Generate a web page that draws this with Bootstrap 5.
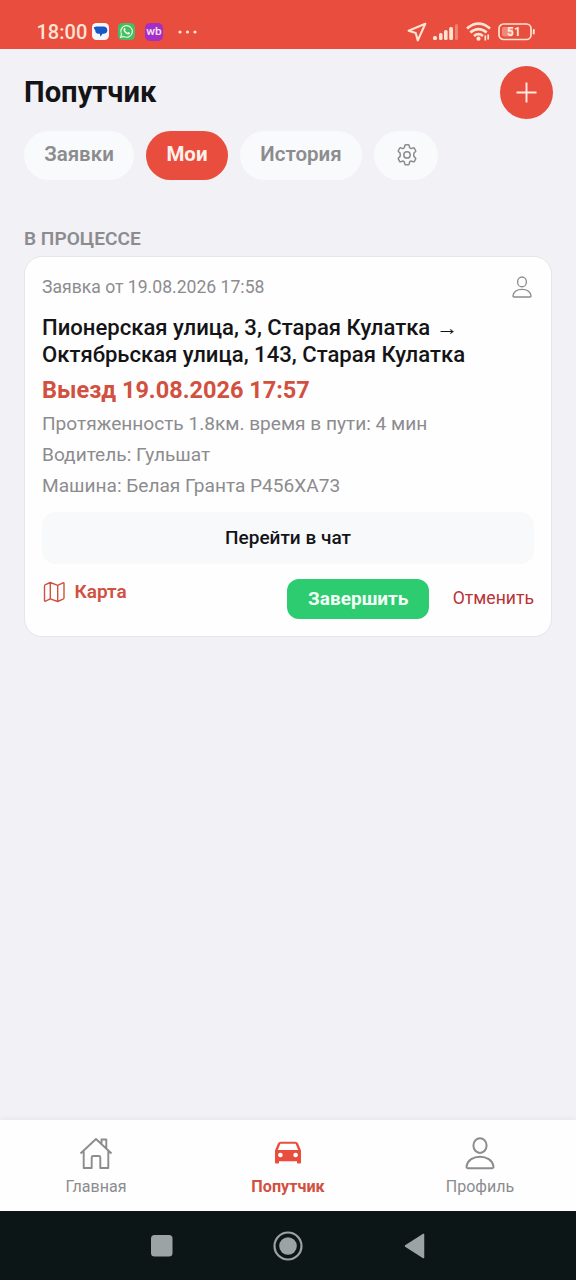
<!DOCTYPE html>
<html lang="ru">
<head>
<meta charset="utf-8">
<meta name="viewport" content="width=device-width, initial-scale=1">
<title>Попутчик</title>
<link href="https://cdn.jsdelivr.net/npm/bootstrap@5.3.0/dist/css/bootstrap.min.css" rel="stylesheet">
<style>
:root{--brand:#e84d3d;--muted:#8c8c8f}
body{font-family:Roboto,"Noto Sans",sans-serif;background:#f2f1f6;color:#141417;height:1280px;overflow:hidden}
svg{display:block;flex:none}
.statusbar{height:48.5px;background:var(--brand);color:#ffe3d3;padding:15px 40px 0 37px}
.clock{font-size:20px;font-weight:500;line-height:34px;width:63px;margin-left:-.5px}
.page-head{height:87.5px;padding:0 23.5px 0 24px}
.page-title{font-size:29.2px;line-height:36px;font-weight:700}
.add-btn{width:53px;height:53px;background:var(--brand)}
.tabs{height:50px;margin:-5.5px 24px 0;gap:12px}
.tab-pill{height:49px;border-radius:25px;background:#f9fafc;color:var(--muted);font-size:20.5px;font-weight:600;line-height:47px;text-align:center}
.tab-pill.active{background:var(--brand);color:#fff0ea;font-weight:700;height:49.5px}
.section-label{color:var(--muted);font-size:19.1px;font-weight:600;line-height:22px;margin:47px 24px 6px}
.ride{margin:0 24px;height:381px;border:1px solid #e6e5ea;border-radius:18px;padding:17px 17px 0;background:#fefefe}
.ride p{margin:0}
.meta{color:var(--muted);font-size:19.1px;line-height:31px}
.meta-date{height:40px;font-size:17.6px;line-height:26px}
.route{font-size:22.1px;font-weight:500;line-height:27px;white-space:nowrap}
.depart{color:#d2503f;font-size:23.5px;font-weight:700;line-height:32px}
.chat-btn{height:52px;border-radius:14px;background:#f8f9fb;font-size:19px;font-weight:500}
.map-link{color:#d2503f;font-size:19px;font-weight:600;line-height:26px;gap:8.5px;padding-left:1px}
.done-btn{width:142px;height:40px;border-radius:12px;background:#2ecc71;color:#f3fff7;font-size:19px;font-weight:700;line-height:40px;text-align:center}
.cancel{color:#b93236;font-size:17.6px;line-height:39px;margin-left:23.5px}
.tabbar{height:91px;background:#fefefe;box-shadow:0 -1px 6px rgba(0,0,0,.05);font-size:16px;color:var(--muted);padding-top:17px}
.tabbar .on{color:#d2503f;font-weight:700;font-size:16.2px}
.tabbar span{line-height:20px;margin-top:6px}
.sysnav{height:69px;background:#0c1617}
</style>
</head>
<body class="d-flex flex-column">
<svg width="0" height="0" class="position-absolute" aria-hidden="true">
  <symbol id="person" viewBox="0 0 30 34"><g fill="none" stroke="currentColor" stroke-width="2"><ellipse cx="15" cy="8.6" rx="6.6" ry="7.3"/><path d="M2.800 31.200C1.700 31.200 1.400 30.400 1.600 29.200 2.600 23 8.400 19.700 15 19.700S27.400 23 28.400 29.200C28.600 30.400 28.300 31.200 27.200 31.200Z" stroke-linejoin="round"/></g></symbol>
</svg>

<header class="statusbar d-flex align-items-start">
  <div class="clock">18:00</div>
  <div class="d-flex align-items-center" style="height:33px">
    <svg class="me-2" width="17" height="17" viewBox="0 0 17 17" style="margin-left:-8px"><rect width="17" height="17" rx="4.500" fill="#f7f7fb"/><path d="M5.500 3.500h6a3.700 3.700 0 0 1 3.900 3.700c0 2.300-1.900 3.600-3.900 3.600h-1L8.500 13.800 7.800 10.800H6.500C4.300 10.800 3.300 9.300 3.300 7.500L1.800 5C1.700 4 3.500 3.500 5.500 3.500z" fill="#1759c4"/></svg>
    <svg width="17" height="17" viewBox="0 0 17 17" style="margin:0 9.500px 0 1.500px"><rect width="17" height="17" rx="4.500" fill="#45bd64"/><path d="M2.600 14.400l.9-3.200a5.800 5.800 0 1 1 2.300 2.300z" fill="none" stroke="#e6f7dc" stroke-width="1.200"/><path d="M6 5.200c.4-.4 1-.3 1.200.2l.4 1c.1.400-.4.800-.5 1 .5 1 1.300 1.800 2.400 2.300.3-.2.700-.8 1.100-.6l1.200.6c.4.200.2 1-.2 1.400-1 .9-2.700.3-4-.8C6.200 9.300 4.700 6.800 6 5.200z" fill="#e6f7dc"/></svg>
    <svg width="18" height="18" viewBox="0 0 18 18"><rect width="18" height="18" rx="5" fill="#a42fc6"/><text x="9" y="12.300" font-family="Roboto, sans-serif" font-size="11.800" font-weight="500" fill="#f8e6f6" text-anchor="middle">wb</text></svg>
    <svg width="22" height="6" viewBox="0 0 22 6" fill="#ffe3d3" style="margin-left:14.500px"><circle cx="3" cy="3" r="1.600"/><circle cx="10.500" cy="3" r="1.600"/><circle cx="18" cy="3" r="1.600"/></svg>
  </div>
  <div class="d-flex align-items-center ms-auto" style="height:34px">
    <svg width="20" height="20" viewBox="0 0 20 20"><path d="M18.300 1.700L1.600 8.800l7.100 2.200 2.100 7.400z" fill="none" stroke="#ffe3d3" stroke-width="2.100" stroke-linejoin="round"/></svg>
    <svg width="26" height="18" viewBox="0 0 26 18" fill="#ffe3d3" style="margin-left:6px"><rect x="0" y="13" width="4" height="4" rx="1.500"/><rect x="6" y="10" width="3.500" height="7" rx="1.500"/><rect x="11" y="7" width="3.600" height="10" rx="1.500"/><rect x="16.200" y="4" width="3.800" height="13" rx="1.500"/><rect x="22" y="1" width="3" height="16" rx="1.500" opacity=".35"/></svg>
    <svg width="26" height="20" viewBox="0 0 26 20" style="margin-left:7px"><g fill="none" stroke="#ffe3d3" stroke-width="2.700"><path d="M1 6.500q11.500-9.600 23 0"/><path d="M4.300 10.500q8.200-6.800 16.400 0"/><path d="M8 14q4.500-3.600 9 0"/></g><circle cx="12.500" cy="16.700" r="2.100" fill="#ffe3d3"/><path d="M19.300 13.500v5M22.200 12.500v5" stroke="#ffe3d3" stroke-width="1.700"/></svg>
    <svg width="38" height="18" viewBox="0 0 38 18" style="margin-left:6px"><rect x="1" y="1" width="32" height="15.500" rx="4.500" fill="none" stroke="#ffe3d3" stroke-width="1.700"/><rect x="4" y="4" width="11" height="9.500" rx="2" fill="#ffe3d3" opacity=".4"/><rect x="34.800" y="6" width="2" height="5.500" rx="1" fill="#ffe3d3"/><text x="16" y="13" font-family="Roboto, sans-serif" font-size="12" font-weight="700" fill="#ffe9dc" text-anchor="middle">51</text></svg>
  </div>
</header>

<main class="flex-grow-1">
  <div class="page-head d-flex align-items-center justify-content-between">
    <h1 class="page-title m-0">Попутчик</h1>
    <div class="add-btn rounded-circle d-flex align-items-center justify-content-center"><svg width="21" height="21" viewBox="0 0 21 21"><path d="M10.500.5v20M.5 10.500h20" stroke="#ffeae2" stroke-width="1.900"/></svg></div>
  </div>
  <nav class="tabs d-flex">
    <div class="tab-pill" style="width:110px">Заявки</div>
    <div class="tab-pill active" style="width:82px">Мои</div>
    <div class="tab-pill" style="width:122px">История</div>
    <div class="tab-pill d-flex align-items-center justify-content-center" style="width:64px"><svg width="22" height="22" viewBox="0 0 22 22" fill="none" stroke="currentColor" stroke-width="1.500" stroke-linejoin="round" style="margin-left:1px"><path d="M8.800 1.600Q9 .8 9.800.8h2.400q.8 0 1 .8l.4 2q.7.900 1.900.9l1.700-.6q.8-.3 1.200.4l1.200 2.200q.4.700-.2 1.200l-1.400 1.300q-.6 1.800 0 3.600l1.400 1.300q.6.500.2 1.200l-1.200 2.200q-.4.700-1.200.4l-1.700-.6q-1.200 0-1.900.9l-.4 2q-.2.800-1 .8H9.800q-.8 0-1-.8l-.4-2q-.7-.9-1.900-.9l-1.700.6q-.8.300-1.200-.4l-1.200-2.200q-.4-.7.200-1.200L4 12.600q.6-1.800 0-3.600L2.600 7.700Q2 7.200 2.400 6.500l1.200-2.200q.4-.7 1.200-.4l1.700.6q1.200 0 1.900-.9z"/><circle cx="11" cy="10.900" r="3.200"/></svg></div>
  </nav>

  <h2 class="section-label">В ПРОЦЕССЕ</h2>
  <article class="ride">
    <div class="meta meta-date d-flex justify-content-between"><span>Заявка от 19.08.2026 17:58</span><svg width="20" height="23" style="margin:2px 2px 0"><use href="#person"/></svg></div>
    <p class="route">Пионерская улица, 3, Старая Кулатка →<br>Октябрьская улица, 143, Старая Кулатка</p>
    <p class="depart" style="margin-top:6px">Выезд 19.08.2026 17:57</p>
    <p class="meta" style="margin-top:2.5px">Протяженность 1.8км. время в пути: 4 мин</p>
    <p class="meta">Водитель: Гульшат</p>
    <p class="meta">Машина: Белая Гранта Р456ХА73</p>
    <div class="chat-btn d-flex align-items-center justify-content-center" style="margin-top:11px">Перейти в чат</div>
    <div class="d-flex align-items-start" style="margin-top:15px">
      <div class="map-link d-flex align-items-center"><svg width="23" height="22" viewBox="0 0 23 22" fill="none" stroke="currentColor" stroke-width="1.400" stroke-linejoin="round"><path d="M7.300 1.500L2.500 3.600Q1.500 4 1.500 5v14.500q0 1 1 .6l4.800-2.300 7.400 2.700 5.300-2.300q1-.5 1-1.500V2.600q0-1.100-1-.7l-5.300 2.400zM7.300 1.500v16.300M14.700 4.300v16.200"/></svg>Карта</div>
      <div class="done-btn ms-auto">Завершить</div>
      <div class="cancel">Отменить</div>
    </div>
  </article>
</main>

<nav class="tabbar row g-0 text-center">
  <div class="col d-flex flex-column align-items-center"><svg width="34" height="34" viewBox="0 0 34 34" fill="none" stroke="currentColor" stroke-width="1.900" stroke-linejoin="round"><path d="M1.500 16.500L17 2l15.500 14.500M4.700 14v17h8V20.500q0-1.500 1.500-1.500h5.600q1.500 0 1.500 1.500V31h8V14M22.500 6.800V2.500h4.800v8.700"/></svg><span>Главная</span></div>
  <div class="col d-flex flex-column align-items-center on"><svg width="30" height="34" viewBox="0 0 30 34"><path fill="#e84d3d" fill-rule="evenodd" d="M2 13.500L4.800 6.700Q5.700 4.700 7.800 4.700h14.400q2.100 0 3 2l2.800 6.800V25.500q0 1-1 1h-2q-1 0-1-1V24.300H6v1.200q0 1-1 1H3q-1 0-1-1zM7.400 6.700L4.800 13h20.400L22.600 6.700zM7.400 15.700a2.300 2.300 0 1 0 .01 0zM22.600 15.700a2.300 2.300 0 1 0 .01 0z"/></svg><span>Попутчик</span></div>
  <div class="col d-flex flex-column align-items-center"><svg width="30" height="34"><use href="#person"/></svg><span>Профиль</span></div>
</nav>
<footer class="sysnav d-flex align-items-center">
  <svg width="22" height="22" viewBox="0 0 22 22" style="margin-left:150.500px"><rect width="21.500" height="21.500" rx="3.500" fill="#9ba3a6"/></svg>
  <svg width="30" height="30" viewBox="0 0 30 30" style="margin-left:100.500px"><circle cx="15" cy="15" r="13.500" fill="none" stroke="#9ba3a6" stroke-width="2.200"/><circle cx="15" cy="15" r="8.800" fill="#9ba3a6"/></svg>
  <svg width="21" height="26" viewBox="0 0 21 26" style="margin-left:100.500px"><path d="M19.500 1.500v23L1.500 13z" fill="#9ba3a6" stroke="#9ba3a6" stroke-width="1.500" stroke-linejoin="round"/></svg>
</footer>
<script src="https://cdn.jsdelivr.net/npm/bootstrap@5.3.0/dist/js/bootstrap.bundle.min.js"></script>
</body>
</html>
